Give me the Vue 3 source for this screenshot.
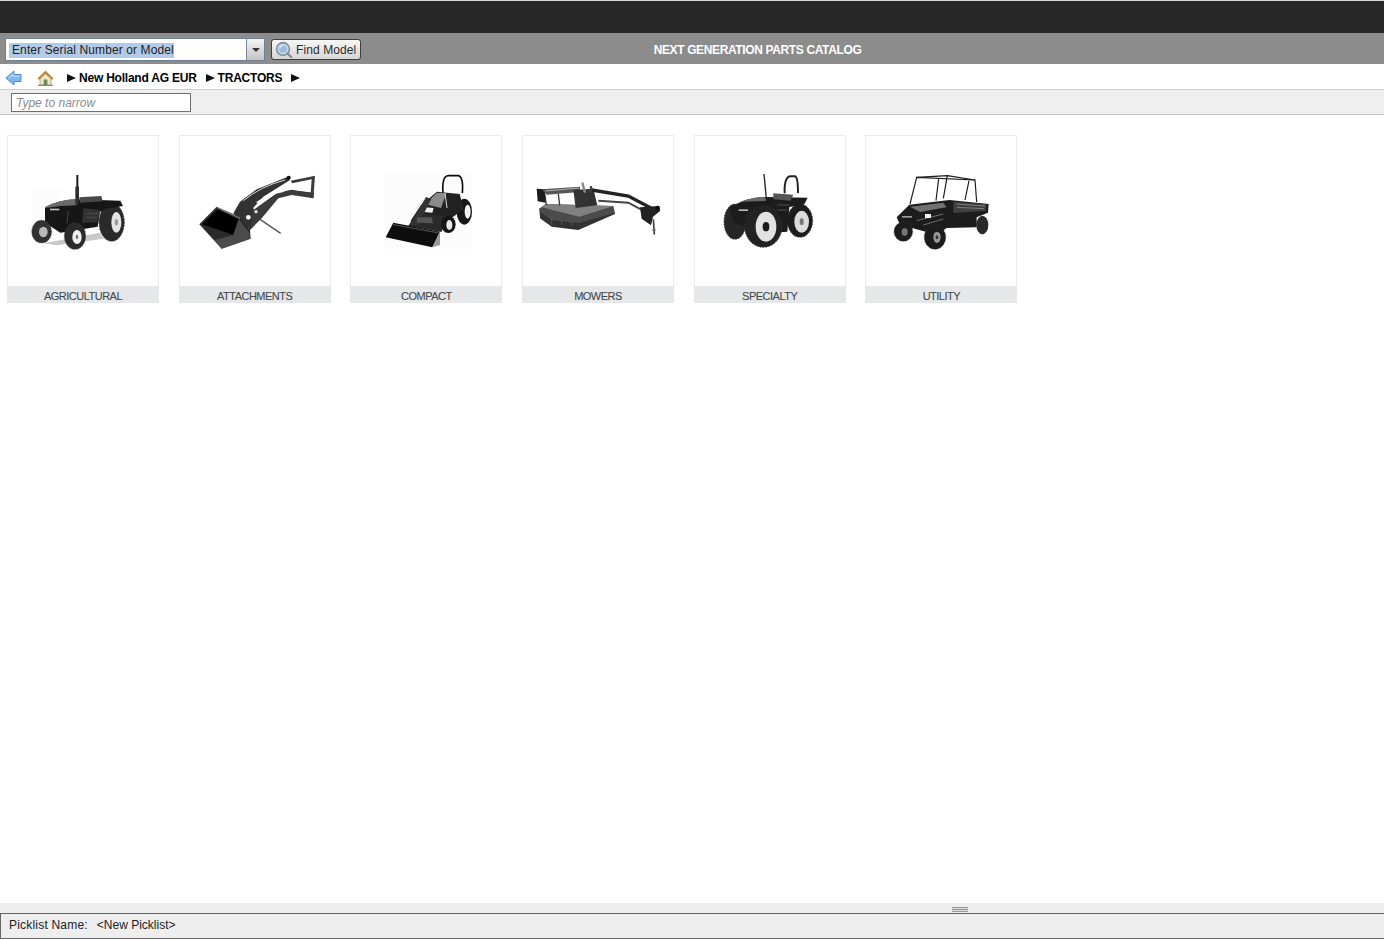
<template>
  <div class="page">
    <div class="topbar"></div>

    <div class="toolbar">
      <div class="combo">
        <div class="combo-input"><span class="selected">Enter Serial Number or Model</span></div>
        <div class="combo-arrow"><i></i></div>
      </div>
      <button class="find-btn">
        <svg width="18" height="18" viewBox="0 0 18 18">
          <circle cx="8" cy="8" r="6.4" fill="#c5d8ec" stroke="#7f8f9f" stroke-width="1.6" />
          <circle cx="8" cy="8" r="3.8" fill="#9dbbdc" />
          <path d="M5 6.5a3.6 3.6 0 0 1 3-2" fill="none" stroke="#eef5fb" stroke-width="1.2" />
          <path d="M12.6 12.6l3.6 3.4" stroke="#8a8a80" stroke-width="2.2" stroke-linecap="round" />
        </svg>
        <span>Find Model</span>
      </button>
      <div class="title">NEXT GENERATION PARTS CATALOG</div>
    </div>

    <div class="crumbs">
      <svg class="back" width="17" height="16" viewBox="0 0 17 16">
        <path d="M1 8L9 1v3.5h7v7H9V15z" fill="#7db7f2" stroke="#4a8ad4" stroke-width="1" stroke-linejoin="round" />
        <path d="M3.5 8L8 4.3v1.9h6.5" fill="none" stroke="#d3e8fc" stroke-width="1" />
      </svg>
      <svg class="home" width="17" height="16" viewBox="0 0 17 16">
        <path d="M3 8v7h11V8L8.5 3z" fill="#efe6cf" stroke="#a89a78" stroke-width=".8" />
        <path d="M.8 8.4L8.5 1l7.7 7.4-1.2 1L8.5 3.4 2 9.4z" fill="#c9892e" stroke="#9a6a24" stroke-width=".5" />
        <rect x="6.6" y="9.5" width="3.8" height="5.5" fill="#6f8f5a" />
        <path d="M1 15.4h15" stroke="#6e9a55" stroke-width="1.2" />
      </svg>
      <i class="tri first"></i>
      <span class="crumb">New Holland AG EUR</span>
      <i class="tri"></i>
      <span class="crumb">TRACTORS</span>
      <i class="tri"></i>
    </div>

    <div class="filterbar">
      <div class="narrow">Type to narrow</div>
    </div>

    <div class="main">
      <div class="card">
        <svg class="pic" viewBox="24 18 450 450">
          <g filter="url(#soft)">
            <path d="M95 175h90l-20 130h-70z" fill="#fcfcfc" />
            <path d="M130 340l170-32 10 18-140 20z" fill="#c9c9c9" />
            <ellipse cx="335" cy="277" rx="38" ry="57" fill="#2b2b2b" stroke="#404040" stroke-width="3" stroke-dasharray="4 5" />
            <ellipse cx="349" cy="277" rx="15" ry="31" fill="#e4e4e4" />
            <ellipse cx="349" cy="277" rx="5" ry="10" fill="#9a9a9a" />
            <path d="M135 232q45-24 98-24l128 4 8 16-50 8-20 10-6 44-112 18-46-30z" fill="#161616" />
            <path d="M135 232q45-24 95-24v18q-50 0-95 8z" fill="#6a6a6a" />
            <rect x="150" y="236" width="28" height="5" fill="#c2c2c2" />
            <path d="M238 202l66-4 4 16-68 4z" fill="#4a4a4a" />
            <path d="M250 235l50 5-4 36-50 4z" fill="#303030" />
            <path d="M205 240l-4 40M260 250h34M260 262h30" stroke="#6a6a6a" stroke-width="1.5" />
            <rect x="229" y="135" width="6" height="50" fill="#1c1c1c" />
            <rect x="226" y="170" width="11" height="52" fill="#2d2d2d" />
            <ellipse cx="125" cy="305" rx="30" ry="34" fill="#303030" stroke="#404040" stroke-width="2.5" stroke-dasharray="3 4" />
            <ellipse cx="130" cy="306" rx="13" ry="16" fill="#b9b9b9" />
            <ellipse cx="225" cy="318" rx="32" ry="40" fill="#2b2b2b" stroke="#404040" stroke-width="2.5" stroke-dasharray="3 4" />
            <ellipse cx="231" cy="321" rx="14" ry="21" fill="#efefef" />
            <ellipse cx="231" cy="321" rx="4" ry="7" fill="#777" />
          </g>
        </svg>
        <div class="label">AGRICULTURAL</div>
      </div>

      <div class="card">
        <svg class="pic" viewBox="540 18 450 450">
          <g filter="url(#soft)">
            <path d="M780 268l62 42" stroke="#555" stroke-width="4" />
            <path d="M872 152l73-15-5 68-9-2 4-55-58 12z" fill="#3c3c3c" />
            <path d="M872 182l56 9" stroke="#2a2a2a" stroke-width="5" />
            <path d="M700 250l20-35 50-37 90-36 10 8-80 50-30 33 10 37-20 30z" fill="#333" />
            <path d="M760 240l70-50 40-10 72 8-2 17-65-10-40 10-50 60-35 35z" fill="#3a3a3a" />
            <path d="M730 212q50-42 125-62" fill="none" stroke="#d8d8d8" stroke-width="3" />
            <path d="M770 218q40-28 80-34" fill="none" stroke="#fff" stroke-width="4" />
            <circle cx="745" cy="262" r="7" fill="#fff" />
            <circle cx="768" cy="245" r="5" fill="#e4e4e4" />
            <path d="M598 283l52-53 72 32 28 38 2 26-87 30z" fill="#2c2c2c" />
            <path d="M606 283l46-45 64 30-16 47z" fill="#060606" />
            <path d="M700 315l16-47 32 40 2 18-85 30-22-25z" fill="#4c4c4c" />
            <path d="M652 233l68 32" stroke="#bdbdbd" stroke-width="2" />
            <circle cx="866" cy="143" r="6" fill="#111" />
          </g>
        </svg>
        <div class="label">ATTACHMENTS</div>
      </div>

      <div class="card">
        <svg class="pic" viewBox="18 18 450 450">
          <g filter="url(#soft)">
            <rect x="118" y="130" width="262" height="226" fill="#fcfcfc" />
            <path d="M294 190q-4-52 16-53h30q16 4 12 52" fill="none" stroke="#111" stroke-width="5" />
            <ellipse cx="358" cy="245" rx="23" ry="39" fill="#191919" />
            <ellipse cx="368" cy="245" rx="9" ry="21" fill="#f2f2f2" />
            <path d="M228 225l48-40 68 7 12 46-50 36-60 8-50-8z" fill="#222" />
            <path d="M190 288l25-40 85 10-10 48z" fill="#2a2a2a" />
            <path d="M240 222l36-34 28 2-16 44z" fill="#8c8c8c" />
            <path d="M240 232l26 2-4 14-26-2z" fill="#f0f0f0" />
            <path d="M195 285l48-84 16 6-40 78z" fill="#333" />
            <path d="M212 238l28-34M300 190l6 44" stroke="#ddd" stroke-width="3" />
            <path d="M215 262h45l4 18-48-2z" fill="#555" />
            <ellipse cx="310" cy="283" rx="22" ry="26" fill="#191919" />
            <ellipse cx="313" cy="285" rx="9" ry="15" fill="#e8e8e8" />
            <path d="M122 322l23-44 140 27-23 47z" fill="#0e0e0e" />
            <path d="M262 352l23-47 0 40z" fill="#9a9a9a" />
            <path d="M145 284l136 25" stroke="#777" stroke-width="2" />
          </g>
        </svg>
        <div class="label">COMPACT</div>
      </div>

      <div class="card">
        <svg class="pic" viewBox="534 18 450 450">
          <g filter="url(#soft)">
            <path d="M582 236l20-14 203 6 5 22-110 45-80-10-35-25z" fill="#4c4c4c" />
            <path d="M590 232l12-10 203 6-102 32z" fill="#808080" />
            <path d="M585 245l35 25 80 10 110-32v4l-110 48-80-10-35-25z" fill="#333" />
            <path d="M620 265v20M650 270v15M680 275v12" stroke="#777" stroke-width="1.5" />
            <path d="M575 176l3 38 24 4-2-40z" fill="#1a1a1a" />
            <path d="M590 178l115-8v16l-100 8z" fill="#555" />
            <path d="M602 183l100-9" stroke="#ddd" stroke-width="2" />
            <path d="M600 195l4 30M640 192l4 34" stroke="#333" stroke-width="4" />
            <path d="M685 180l60-4 12 50-65 8z" fill="#333" />
            <path d="M712 158l8 30" stroke="#888" stroke-width="7" />
            <path d="M738 168v20" stroke="#444" stroke-width="7" />
            <path d="M740 180l110 18 72 38" fill="none" stroke="#222" stroke-width="10" />
            <path d="M760 212l90 6 60 32" fill="none" stroke="#444" stroke-width="6" />
            <path d="M885 232l55-4 6 14-22 18-6 26-28-20z" fill="#222" />
            <circle cx="938" cy="234" r="7" fill="#111" />
            <path d="M925 268l3 46" stroke="#444" stroke-width="5" />
            <circle cx="927" cy="300" r="5" fill="#666" />
          </g>
        </svg>
        <div class="label">MOWERS</div>
      </div>

      <div class="card">
        <svg class="pic" viewBox="15 18 450 450">
          <g filter="url(#soft)">
            <path d="M222 132l8 85" stroke="#222" stroke-width="4" />
            <path d="M284 190q-2-50 18-51h14q8 4 8 50" fill="none" stroke="#222" stroke-width="6" />
            <ellipse cx="330" cy="272" rx="38" ry="50" fill="#1f1f1f" stroke="#3a3a3a" stroke-width="3" stroke-dasharray="4 5" />
            <ellipse cx="335" cy="275" rx="22" ry="33" fill="#dcdcdc" />
            <ellipse cx="335" cy="275" rx="6" ry="10" fill="#777" />
            <ellipse cx="135" cy="275" rx="33" ry="53" fill="#262626" stroke="#3a3a3a" stroke-width="3" stroke-dasharray="4 5" />
            <path d="M118 235q50-35 110-34l125 2-10 20-45 8-6 74-60 4-100-30z" fill="#1a1a1a" />
            <path d="M150 215q40-14 76-14l2 12z" fill="#6a6a6a" />
            <rect x="146" y="238" width="28" height="5" fill="#b9b9b9" />
            <path d="M250 190l60 4-8 18-52-4z" fill="#555" />
            <path d="M262 225h36M262 240h30" stroke="#6a6a6a" stroke-width="2" />
            <ellipse cx="220" cy="290" rx="56" ry="62" fill="#232323" stroke="#3a3a3a" stroke-width="3" stroke-dasharray="4 5" />
            <ellipse cx="228" cy="290" rx="31" ry="45" fill="#e2e2e2" />
            <ellipse cx="228" cy="290" rx="10" ry="14" fill="#1d1d1d" />
          </g>
        </svg>
        <div class="label">SPECIALTY</div>
      </div>

      <div class="card">
        <svg class="pic" viewBox="528 18 450 450">
          <g filter="url(#soft)">
            <g fill="none" stroke="#1a1a1a" stroke-width="3.5">
              <path d="M660 222l20-80 175 8 5 66" />
              <path d="M738 212l8-66M825 210l12-58M760 205l12-68M772 137l-92 5M772 137l83 13" />
            </g>
            <ellipse cx="877" cy="285" rx="18" ry="28" fill="#2a2a2a" />
            <path d="M620 262l38-38 120-14 118 12-2 26-34 14v30l-90 2-30 20-110-30z" fill="#1c1c1c" />
            <path d="M660 230l100-12 10 14-80 14z" fill="#707070" />
            <path d="M790 215l100 8-4 20-96 6z" fill="#3f3f3f" />
            <path d="M800 222l85 6M800 232l82 4M680 272l80-20M700 285l60-18" stroke="#9a9a9a" stroke-width="2" />
            <rect x="705" y="252" width="18" height="12" fill="#f0f0f0" />
            <rect x="636" y="258" width="30" height="5" fill="#999" />
            <ellipse cx="640" cy="305" rx="28" ry="29" fill="#1f1f1f" stroke="#404040" stroke-width="2.5" stroke-dasharray="3 4" />
            <ellipse cx="644" cy="306" rx="9" ry="11" fill="#777" />
            <ellipse cx="735" cy="322" rx="32" ry="36" fill="#1a1a1a" stroke="#404040" stroke-width="2.5" stroke-dasharray="3 4" />
            <ellipse cx="741" cy="322" rx="11" ry="17" fill="#999" />
            <ellipse cx="741" cy="322" rx="4" ry="6" fill="#333" />
          </g>
        </svg>
        <div class="label">UTILITY</div>
      </div>

      <svg width="0" height="0" class="defs">
        <defs>
          <filter id="soft" x="-5%" y="-5%" width="110%" height="110%">
            <feGaussianBlur stdDeviation="0.9" />
          </filter>
        </defs>
      </svg>
    </div>

    <div class="splitter">
      <div class="grip"></div>
    </div>

    <div class="footer">
      <span class="pick-label">Picklist Name:</span>
      <span class="pick">&lt;New Picklist&gt;</span>
    </div>
  </div>
</template>

<script setup>
</script>

<style scoped>
.page {
  height: 939px;
  display: flex;
  flex-direction: column;
  background: #fff;
  overflow: hidden;
  font-family: "Liberation Sans", Arial, sans-serif;
}

.topbar {
  height: 32px;
  flex: none;
  background: #272727;
  border-top: 1px solid #d8d8d8;
}

.toolbar {
  height: 31px;
  flex: none;
  box-sizing: border-box;
  padding: 5px 0 0 5px;
  display: flex;
  align-items: flex-start;
  background: #8c8c8c;
}

.combo {
  width: 260px;
  height: 23px;
  box-sizing: border-box;
  display: flex;
  background: #fff;
  border: 1px solid #6d8094;
  box-shadow: 0 -1px 0 #7f97b3;
}

.combo-input {
  flex: 1;
  padding: 4px 0 0 3px;
  font-size: 12px;
  line-height: 15px;
  letter-spacing: 0.11px;
  color: #222;
}

.selected {
  display: inline-block;
  padding-left: 3px;
  background: #b4cbe8;
}

.combo-arrow {
  width: 17px;
  display: flex;
  align-items: center;
  justify-content: center;
  border-left: 1px solid #7a8a9a;
  background: linear-gradient(#f4f4f4, #c4c4c4);
}

.combo-arrow i {
  border-left: 4px solid transparent;
  border-right: 4px solid transparent;
  border-top: 4px solid #333;
}

.find-btn {
  width: 90px;
  height: 21px;
  margin: 1px 0 0 6px;
  padding: 0 0 0 3px;
  box-sizing: border-box;
  display: flex;
  align-items: center;
  gap: 3px;
  border: 1px solid #3f3f3f;
  border-radius: 3px;
  background: linear-gradient(#f6f6f6, #d6d6d6);
  font-family: inherit;
  font-size: 12px;
  letter-spacing: 0.1px;
  color: #2c2c2c;
}

.title {
  flex: 1;
  padding: 5px 230px 0 0;
  text-align: center;
  font-size: 12px;
  line-height: 15px;
  font-weight: bold;
  letter-spacing: -0.37px;
  color: #fff;
}

.crumbs {
  height: 25px;
  flex: none;
  padding: 2px 0 0 5px;
  box-sizing: border-box;
  display: flex;
  align-items: center;
  font-size: 12px;
  font-weight: bold;
  letter-spacing: -0.22px;
  color: #000;
}

.home {
  margin-left: 15px;
}

.tri {
  width: 0;
  height: 0;
  margin-left: 9px;
  border-top: 4.5px solid transparent;
  border-bottom: 4.5px solid transparent;
  border-left: 9px solid #111;
}

.tri.first {
  margin-left: 13px;
}

.crumb {
  margin-left: 3px;
}

.filterbar {
  height: 26px;
  flex: none;
  box-sizing: border-box;
  padding: 3px 0 0 11px;
  background: #efefef;
  border-top: 1px solid #cfcfcf;
  border-bottom: 1px solid #c4c4c4;
}

.narrow {
  width: 180px;
  height: 19px;
  box-sizing: border-box;
  padding: 2px 0 0 4px;
  background: #fff;
  border: 1px solid #707070;
  font-size: 12px;
  line-height: 15px;
  font-style: italic;
  color: #8b8b8b;
}

.main {
  flex: 1;
  display: flex;
  align-items: flex-start;
  gap: 19.68px;
  padding: 20px 0 0 7px;
}

.card {
  width: 152px;
  flex: none;
  box-sizing: border-box;
  border: 1px solid #ececec;
  border-bottom: none;
}

.pic {
  display: block;
  width: 150px;
  height: 150px;
}

.label {
  height: 17px;
  margin: 0 -1px;
  background: #e6e7e9;
  text-align: center;
  font-size: 11px;
  line-height: 20px;
  letter-spacing: -0.5px;
  color: #44494d;
  -webkit-text-stroke: 0.1px #44494d;
}

.defs {
  position: absolute;
}

.splitter {
  height: 10px;
  flex: none;
  display: flex;
  justify-content: center;
  padding-left: 536px;
  background: #eee;
}

.grip {
  width: 16px;
  height: 5px;
  margin-top: 4px;
  background: repeating-linear-gradient(#999 0, #999 1px, #ddd 1px, #ddd 2px);
}

.footer {
  height: 26px;
  flex: none;
  box-sizing: border-box;
  padding: 0 0 2px 8px;
  display: flex;
  align-items: center;
  background: #eee;
  border: 1px solid #666;
  border-right: none;
  font-size: 12px;
  color: #222;
}

.pick-label {
  letter-spacing: 0.2px;
}

.pick {
  margin-left: 9px;
}
</style>

<style>
html, body {
  margin: 0;
  background: #fff;
}
</style>
